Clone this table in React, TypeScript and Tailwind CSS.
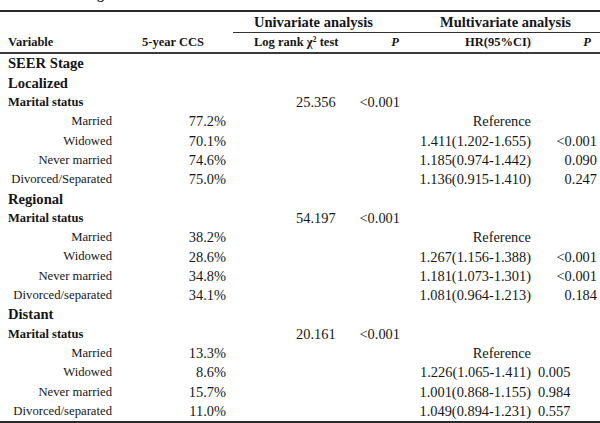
const cols = "grid grid-cols-[115px_118px_117px_55px_128px_67px] items-center"

type Sub = {
  label: string
  ccs: string
  hr: string
  p?: string
}

type Stage = {
  name: string
  logrank: string
  p: string
  leftP?: boolean
  rows: Sub[]
}

const stages: Stage[] = [
  {
    name: "Localized",
    logrank: "25.356",
    p: "<0.001",
    rows: [
      { label: "Married", ccs: "77.2%", hr: "Reference" },
      { label: "Widowed", ccs: "70.1%", hr: "1.411(1.202-1.655)", p: "<0.001" },
      { label: "Never married", ccs: "74.6%", hr: "1.185(0.974-1.442)", p: "0.090" },
      { label: "Divorced/Separated", ccs: "75.0%", hr: "1.136(0.915-1.410)", p: "0.247" },
    ],
  },
  {
    name: "Regional",
    logrank: "54.197",
    p: "<0.001",
    rows: [
      { label: "Married", ccs: "38.2%", hr: "Reference" },
      { label: "Widowed", ccs: "28.6%", hr: "1.267(1.156-1.388)", p: "<0.001" },
      { label: "Never married", ccs: "34.8%", hr: "1.181(1.073-1.301)", p: "<0.001" },
      { label: "Divorced/separated", ccs: "34.1%", hr: "1.081(0.964-1.213)", p: "0.184" },
    ],
  },
  {
    name: "Distant",
    logrank: "20.161",
    p: "<0.001",
    leftP: true,
    rows: [
      { label: "Married", ccs: "13.3%", hr: "Reference" },
      { label: "Widowed", ccs: "8.6%", hr: "1.226(1.065-1.411)", p: "0.005" },
      { label: "Never married", ccs: "15.7%", hr: "1.001(0.868-1.155)", p: "0.984" },
      { label: "Divorced/separated", ccs: "11.0%", hr: "1.049(0.894-1.231)", p: "0.557" },
    ],
  },
]

const rowH = "h-[19.32px]"
const val = "text-[14.4px] leading-none whitespace-nowrap"

const StageHeading = ({ children }: { children: React.ReactNode }) => (
  <div className={`${cols} ${rowH}`}>
    <div className="col-span-6 pl-2 text-[14.6px] font-bold leading-none">{children}</div>
  </div>
)

const StageBlock = ({ stage }: { stage: Stage }) => (
  <>
    <StageHeading>{stage.name}</StageHeading>
    <div className={`${cols} ${rowH}`}>
      <div className="col-span-2 pl-2 text-[12.5px] font-bold leading-none whitespace-nowrap">Marital status</div>
      <div className={`${val} pl-[63px]`}>{stage.logrank}</div>
      <div className={`${val} pr-[5px] text-right`}>{stage.p}</div>
      <div />
      <div />
    </div>
    {stage.rows.map((r) => (
      <div key={r.label} className={`${cols} ${rowH}`}>
        <div className="pr-[3px] text-right text-[12.7px] leading-none whitespace-nowrap">{r.label}</div>
        <div className={`${val} pr-[7px] text-right`}>{r.ccs}</div>
        <div />
        <div />
        <div className={`${val} pr-[2px] text-right`}>{r.hr}</div>
        <div className={`${val} ${stage.leftP ? "pl-[5px]" : "pr-[3px] text-right"}`}>{r.p ?? ""}</div>
      </div>
    ))}
  </>
)

export default function App() {
  return (
    <div className="h-[423px] w-[600px] overflow-hidden bg-white font-['Liberation_Serif','Times_New_Roman',serif] text-[#161616]">
      {/* caption above, cut off by the crop */}
      <div className="h-[10px] overflow-hidden pl-[97px]">
        <div className="-mt-[13px] text-[14px] font-bold leading-[16px]">g</div>
      </div>

      <div className="border-t-2 border-b-2 border-[#2a2a2a]">
        <div className={`${cols} h-[21px]`}>
          <div />
          <div />
          <div className="col-span-2 flex h-full items-center border-b border-[#333] pl-[21px] text-[14.5px] font-bold leading-none whitespace-nowrap">
            Univariate analysis
          </div>
          <div className="col-span-2 flex h-full items-center border-b border-[#333] pl-[35px] text-[14.5px] font-bold leading-none whitespace-nowrap">
            Multivariate analysis
          </div>
        </div>

        <div className={`${cols} h-[21px] border-b-2 border-[#3a3a3a] text-[12.5px] font-bold leading-none`}>
          <div className="pl-2">Variable</div>
          <div className="pl-[27px]">5-year CCS</div>
          <div className="pl-[21px] whitespace-nowrap">
            Log rank χ<sup className="text-[8px]">2</sup> test
          </div>
          <div className="pr-[6px] text-right italic">P</div>
          <div className="pl-[60px]">HR(95%CI)</div>
          <div className="pr-[9px] text-right italic">P</div>
        </div>

        <StageHeading>SEER Stage</StageHeading>
        {stages.map((s) => (
          <StageBlock key={s.name} stage={s} />
        ))}
      </div>
    </div>
  )
}
